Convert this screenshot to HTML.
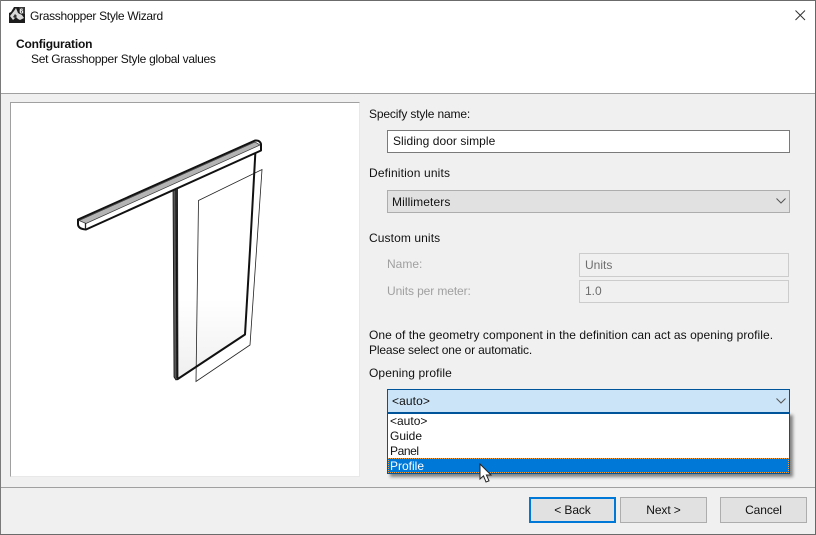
<!DOCTYPE html>
<html><head><meta charset="utf-8">
<style>
html,body{margin:0;padding:0;width:816px;height:535px;overflow:hidden;background:#f0f0f0}
body{font-family:"Liberation Sans",sans-serif;font-size:12px;color:#111;position:relative}
.a{position:absolute;box-sizing:border-box;white-space:nowrap}
.t{position:absolute;white-space:nowrap;line-height:15px;height:15px}
.dis{color:#a0a0a0}
.btn{position:absolute;box-sizing:border-box;height:26px;top:497px;background:#e1e1e1;border:1px solid #adadad;text-align:center;line-height:24px;letter-spacing:-.1px}
</style></head><body>
<div class="a" style="left:0;top:0;width:816px;height:94px;background:#fff;border-bottom:1px solid #a0a0a0"></div>
<div class="a" style="left:0;top:0;width:816px;height:1px;background:#6b6b6b"></div>
<div class="a" style="left:0;top:0;width:1px;height:535px;background:#7a7a7a"></div>
<div class="a" style="left:815px;top:0;width:1px;height:535px;background:#5a6a78"></div>
<div class="a" style="left:0;top:534px;width:816px;height:1px;background:#6b6b6b"></div>

<svg class="a" style="left:9px;top:7px" width="16" height="16" viewBox="0 0 16 16">
<rect width="16" height="16" fill="#1c1c1c"/>
<path d="M0 0H5L2 5L0 6Z" fill="#fff"/>
<path d="M1 9L5 4L7 1L9 6L13 8L15 11L11 13L9 12L7 10L4 13Z" fill="#d8d8d8"/>
<path d="M4 10L6 7L8 9L6 11Z" fill="#333"/>
<rect x="10" y="0" width="6" height="7" fill="#3a3a3a"/>
<text x="10.500" y="6.500" font-family="Liberation Sans" font-size="7" font-weight="bold" fill="#fff">6</text>
</svg>
<div class="t" style="left:30px;top:9px;letter-spacing:-.3px">Grasshopper Style Wizard</div>
<svg class="a" style="left:794px;top:9px" width="12" height="12" viewBox="0 0 12 12"><path d="M1.500 1.500L11 11M11 1.500L1.500 11" stroke="#333" stroke-width="1" fill="none"/></svg>
<div class="t" style="left:16px;top:37px;font-weight:bold;letter-spacing:-.18px">Configuration</div>
<div class="t" style="left:31px;top:52px;letter-spacing:-.27px">Set Grasshopper Style global values</div>

<div class="a" style="left:10px;top:102px;width:350px;height:375px;background:#fff;border:1px solid;border-color:#a0a0a0 #e8e8e8 #e8e8e8 #a0a0a0"></div>
<svg class="a" style="left:0;top:0" width="370" height="400" viewBox="0 0 370 400">
<defs><linearGradient id="g" x1="0" y1="0" x2="0" y2="1"><stop offset=".65" stop-color="#fff"/><stop offset="1" stop-color="#efefef"/></linearGradient></defs>
<path d="M177 190L255 152L245 334L177 379Z" fill="url(#g)"/>
<path d="M198.500 200.500L262 169.500L250 345L196 381.500Z" fill="none" stroke="#222" stroke-width=".8"/>
<path d="M173 188.500L174 377L176 380L178 379L177.500 186.500Z" fill="#555" stroke="#111" stroke-width=".8" stroke-linejoin="round"/>
<path d="M176 190L177 378" stroke="#111" stroke-width="1.200"/>
<path d="M255.500 150L250 250L245 334.500L177 379.500" fill="none" stroke="#111" stroke-width="2" stroke-linejoin="round"/>
<path d="M78 219.500L255 140.500Q260 140 261 144L261 150.500L86 229.500Q78 229 78 224Z" fill="#fff" stroke="#111" stroke-width="2" stroke-linejoin="round"/>
<path d="M79 220.500L255 142L260 145L86 223.500Z" fill="#b4b4b4" stroke="#333" stroke-width=".7"/>
<path d="M85.500 223L85.500 229" stroke="#222" stroke-width="1.300"/>
</svg>

<div class="t" style="left:369px;top:107px;letter-spacing:-.16px">Specify style name:</div>
<div class="a" style="left:387px;top:130px;width:403px;height:23px;background:#fff;border:1px solid #7a7a7a;line-height:21px;padding-left:5px;letter-spacing:.05px">Sliding door simple</div>
<div class="t" style="left:369px;top:166px;letter-spacing:.15px">Definition units</div>
<div class="a" style="left:387px;top:190px;width:403px;height:23px;background:#e1e1e1;border:1px solid #adadad;line-height:22px;padding-left:4px;letter-spacing:.1px">Millimeters</div>
<svg class="a" style="left:776px;top:198px" width="10" height="6"><path d="M.5 .5L5 5L9.500 .5" stroke="#555" fill="none"/></svg>

<div class="t" style="left:369px;top:231px;letter-spacing:.1px">Custom units</div>
<div class="t dis" style="left:387px;top:257px">Name:</div>
<div class="a" style="left:579px;top:253px;width:210px;height:24px;background:#f0f0f0;border:1px solid #ccc;line-height:22px;padding-left:5px;color:#6d6d6d">Units</div>
<div class="t dis" style="left:387px;top:284px;letter-spacing:-.1px">Units per meter:</div>
<div class="a" style="left:579px;top:280px;width:210px;height:23px;background:#f0f0f0;border:1px solid #ccc;line-height:21px;padding-left:5px;color:#6d6d6d">1.0</div>

<div class="t" style="left:369px;top:328px;letter-spacing:.06px">One of the geometry component in the definition can act as opening profile.</div>
<div class="t" style="left:369px;top:343px;letter-spacing:-.14px">Please select one or automatic.</div>
<div class="t" style="left:369px;top:366px;letter-spacing:.1px">Opening profile</div>

<div class="a" style="left:387px;top:389px;width:403px;height:24px;background:#cce4f7;border:1px solid #005499;line-height:22px;padding-left:4px;letter-spacing:.1px">&lt;auto&gt;</div>
<svg class="a" style="left:776px;top:398px" width="10" height="6"><path d="M.5 .5L5 5L9.500 .5" stroke="#555" fill="none"/></svg>
<div class="a" style="left:387px;top:412px;width:403px;height:62px;background:#fff;border:1px solid #005499;border-top:2px solid #005499;box-shadow:3px 3px 3px rgba(0,0,0,.45)"></div>
<div class="t" style="left:390px;top:414px">&lt;auto&gt;</div>
<div class="t" style="left:390px;top:429px">Guide</div>
<div class="t" style="left:390px;top:444px;letter-spacing:-.4px">Panel</div>
<div class="a" style="left:388px;top:458px;width:401px;height:15px;background:#0078d7;outline:1px dotted #f0a040;outline-offset:-1px"></div>
<div class="t" style="left:390px;top:459px;color:#fff">Profile</div>
<svg class="a" style="left:479px;top:463px" width="14" height="21" viewBox="0 0 14 21"><path d="M1 1L1 16L4.500 12.800L7 19L10 17.800L7.400 12L12 12Z" fill="#fff" stroke="#222" stroke-width="1" stroke-linejoin="miter"/></svg>

<div class="a" style="left:1px;top:487px;width:814px;height:1px;background:#a0a0a0"></div>
<div class="btn" style="left:529px;width:87px;border:2px solid #0078d7;line-height:22px">&lt; Back</div>
<div class="btn" style="left:620px;width:87px">Next &gt;</div>
<div class="btn" style="left:720px;width:87px">Cancel</div>
</body></html>
